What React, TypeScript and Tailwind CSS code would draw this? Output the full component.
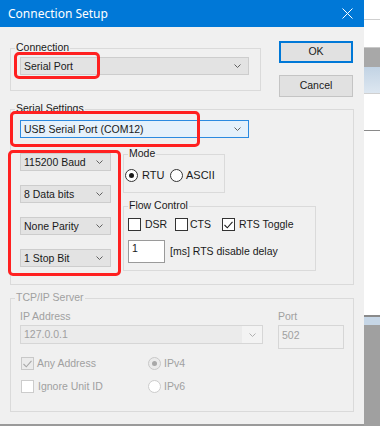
import React from "react";

const Chevron = ({ color = "#606060" }: { color?: string }) => (
  <svg width="7" height="4" viewBox="0 0 7 4" className="block">
    <polyline points="0.5,0.5 3.5,3.5 6.5,0.5" fill="none" stroke={color} strokeWidth="1" />
  </svg>
);

const Combo = ({
  text,
  className,
  blue,
}: {
  text: string;
  className: string;
  blue?: boolean;
}) => (
  <div
    className={
      "flex items-center justify-between pl-[3px] pr-[7px] border " +
      (blue ? "bg-[#e5f1fb] border-[#2b8ae0] " : "bg-[#e3e3e3] border-[#cdcdcd] ") +
      className
    }
  >
    <span className="leading-none">{text}</span>
    <Chevron />
  </div>
);

const Group = ({
  label,
  className,
  children,
  disabledLabel,
}: {
  label: string;
  className: string;
  children?: React.ReactNode;
  disabledLabel?: boolean;
}) => (
  <div className={"relative border border-[#dadada] " + className}>
    <span
      className={
        "absolute left-[4px] top-[-8px] px-[1px] bg-[#f0f0f0] leading-[13px] " +
        (disabledLabel ? "text-[#a0a0a0]" : "")
      }
    >
      {label}
    </span>
    {children}
  </div>
);

const Check = ({ checked, disabled }: { checked?: boolean; disabled?: boolean }) => (
  <div
    className={
      "w-[13px] h-[13px] border flex items-center justify-center shrink-0 " +
      (disabled
        ? checked
          ? "bg-[#ebebeb] border-[#c8c8c8]"
          : "bg-white border-[#cccccc]"
        : "bg-white border-[#333333]")
    }
  >
    {checked && (
      <svg width="9" height="8" viewBox="0 0 9 8" className="block">
        <polyline
          points="0.5,4 3.3,6.8 8.5,0.8"
          fill="none"
          stroke={disabled ? "#a8a8a8" : "#222"}
          strokeWidth="1.1"
        />
      </svg>
    )}
  </div>
);

const Radio = ({ checked, disabled }: { checked?: boolean; disabled?: boolean }) => (
  <div
    className={
      "w-[13px] h-[13px] rounded-full border flex items-center justify-center shrink-0 " +
      (disabled
        ? checked
          ? "bg-[#ebebeb] border-[#c8c8c8]"
          : "bg-white border-[#cccccc]"
        : "bg-white border-[#333333]")
    }
  >
    {checked && (
      <div
        className={
          "w-[5px] h-[5px] rounded-full " + (disabled ? "bg-[#a8a8a8]" : "bg-[#1a1a1a]")
        }
      />
    )}
  </div>
);

export default function App() {
  return (
    <div className="flex w-[380px] h-[426px] overflow-hidden font-['Liberation_Sans',Arial,sans-serif] text-[10.5px] text-[#1a1a1a]">
      <div className="relative w-[364px] h-full flex flex-col bg-[#f0f0f0]">
        {/* title bar */}
        <div className="h-[27px] shrink-0 bg-[#0078d7] flex items-center justify-between pl-[8px] pr-[11px] text-white">
          <span className="font-['Noto_Sans',sans-serif] text-[12px] leading-none">
            Connection Setup
          </span>
          <svg width="11" height="11" viewBox="0 0 11 11" className="block">
            <path d="M0.5 0.5L10.5 10.5M10.5 0.5L0.5 10.5" stroke="white" strokeWidth="1" />
          </svg>
        </div>

        {/* body */}
        <div className="flex-1 px-[10px]">
          <div className="flex items-start">
            <Group label="Connection" className="mt-[21px] w-[251px] pt-[8px] pl-[9px] pr-[11px] pb-[15px]">
              <Combo text="Serial Port" className="w-[229px] h-[18px]" />
            </Group>
            <div className="ml-[18px] mt-[14px] flex flex-col gap-[12px]">
              <div className="w-[74px] h-[22px] bg-[#e1e1e1] border-2 border-[#0078d7] flex items-center justify-center">
                OK
              </div>
              <div className="w-[74px] h-[22px] bg-[#e1e1e1] border border-[#c4c4c4] flex items-center justify-center">
                Cancel
              </div>
            </div>
          </div>

          <Group label="Serial Settings" className="mt-[12px] w-[344px] pt-[10px] pl-[9px] pb-[13px]">
            <Combo text="USB Serial Port (COM12)" blue className="w-[229px] h-[18px]" />
            <div className="flex items-start mt-[15px]">
              <div className="flex flex-col gap-[14px]">
                <Combo text="115200 Baud" className="w-[91px] h-[18px]" />
                <Combo text="8 Data bits" className="w-[91px] h-[18px]" />
                <Combo text="None Parity" className="w-[91px] h-[18px]" />
                <Combo text="1 Stop Bit" className="w-[91px] h-[18px]" />
              </div>
              <div className="ml-[12px] flex flex-col">
                <Group label="Mode" className="mt-[1px] w-[102px] h-[39px] pt-[14px] pl-[1px]">
                  <div className="flex items-center">
                    <div className="flex items-center w-[45px]">
                      <Radio checked />
                      <span className="ml-[4px] text-[11px] leading-none">RTU</span>
                    </div>
                    <div className="flex items-center">
                      <Radio />
                      <span className="ml-[3px] text-[11px] leading-none">ASCII</span>
                    </div>
                  </div>
                </Group>
                <Group label="Flow Control" className="mt-[13px] w-[193px] h-[65px] pt-[11px] pl-[4px]">
                  <div className="flex items-center">
                    <div className="flex items-center w-[47px]">
                      <Check />
                      <span className="ml-[4px] leading-none">DSR</span>
                    </div>
                    <div className="flex items-center w-[47px]">
                      <Check />
                      <span className="ml-[2px] leading-none">CTS</span>
                    </div>
                    <div className="flex items-center">
                      <Check checked />
                      <span className="ml-[4px] leading-none">RTS Toggle</span>
                    </div>
                  </div>
                  <div className="flex items-center mt-[9px]">
                    <div className="w-[37px] h-[23px] bg-white border border-[#9a9a9a] pl-[3px] pt-[2px] leading-none">
                      1
                    </div>
                    <span className="ml-[5px] leading-none">[ms] RTS disable delay</span>
                  </div>
                </Group>
              </div>
            </div>
          </Group>

          <Group
            label="TCP/IP Server"
            className="mt-[13px] w-[344px] h-[114px] pt-[11px] pl-[9px] text-[#a0a0a0]"
          >
            <span className="hidden" />
            <div className="flex items-start">
              <div className="flex flex-col w-[243px]">
                <span className="leading-[13px]">IP Address</span>
                <div className="mt-[2px] h-[19px] flex border border-[#d6d6d6] bg-[#ebebeb]">
                  <div className="flex-1 pl-[3px] flex items-center leading-none">127.0.0.1</div>
                  <div className="w-[20px] bg-[#f3f3f3] flex items-center justify-center">
                    <Chevron color="#b0b0b0" />
                  </div>
                </div>
              </div>
              <div className="ml-[15px] flex flex-col w-[66px]">
                <span className="leading-[13px]">Port</span>
                <div className="mt-[2px] h-[24px] border border-[#d6d6d6] bg-[#f0f0f0] pl-[3px] pt-[4px] leading-none">
                  502
                </div>
              </div>
            </div>
            <div className="mt-[8px] flex flex-col gap-[10px] pl-[1px]">
              <div className="flex items-center">
                <div className="flex items-center w-[127px]">
                  <Check checked disabled />
                  <span className="ml-[3px] leading-none">Any Address</span>
                </div>
                <div className="flex items-center">
                  <Radio checked disabled />
                  <span className="ml-[3px] leading-none">IPv4</span>
                </div>
              </div>
              <div className="flex items-center">
                <div className="flex items-center w-[127px]">
                  <Check disabled />
                  <span className="ml-[4px] leading-none">Ignore Unit ID</span>
                </div>
                <div className="flex items-center">
                  <Radio disabled />
                  <span className="ml-[3px] leading-none">IPv6</span>
                </div>
              </div>
            </div>
          </Group>
        </div>
        <div className="h-[2px] shrink-0 bg-[#9a9a9a]" />

        {/* red annotation boxes */}
        <div className="absolute left-[14px] top-[52px] w-[86px] h-[27px] border-[3px] border-[#ff2020] rounded-[5px]" />
        <div className="absolute left-[10px] top-[111px] w-[190px] h-[36px] border-[3px] border-[#ff2020] rounded-[5px]" />
        <div className="absolute left-[8px] top-[150px] w-[113px] h-[126px] border-[3px] border-[#ff2020] rounded-[5px]" />
      </div>

      {/* background strip */}
      <div className="w-[16px] h-full flex flex-col bg-white">
        <div className="h-[19px]" />
        <div className="h-[1px] bg-[#cfcfcf]" />
        <div className="h-[27px]" />
        <div className="h-[20px] bg-[#a8a8a8] border-t border-[#c8c8c8]" />
        <div className="h-[26px] bg-gradient-to-b from-[#c2d3e4] to-[#dde7f1]" />
        <div className="h-[1px] bg-[#d0d0d0]" />
        <div className="h-[36px]" />
        <div className="h-[1px] bg-[#8a8a8a]" />
        <div className="h-[184px]" />
        <div className="h-[2px] bg-[#8a8a8a]" />
        <div className="h-[8px] bg-[#c6d6e6]" />
        <div className="flex-1 bg-[#a0a0a0]" />
      </div>
    </div>
  );
}
